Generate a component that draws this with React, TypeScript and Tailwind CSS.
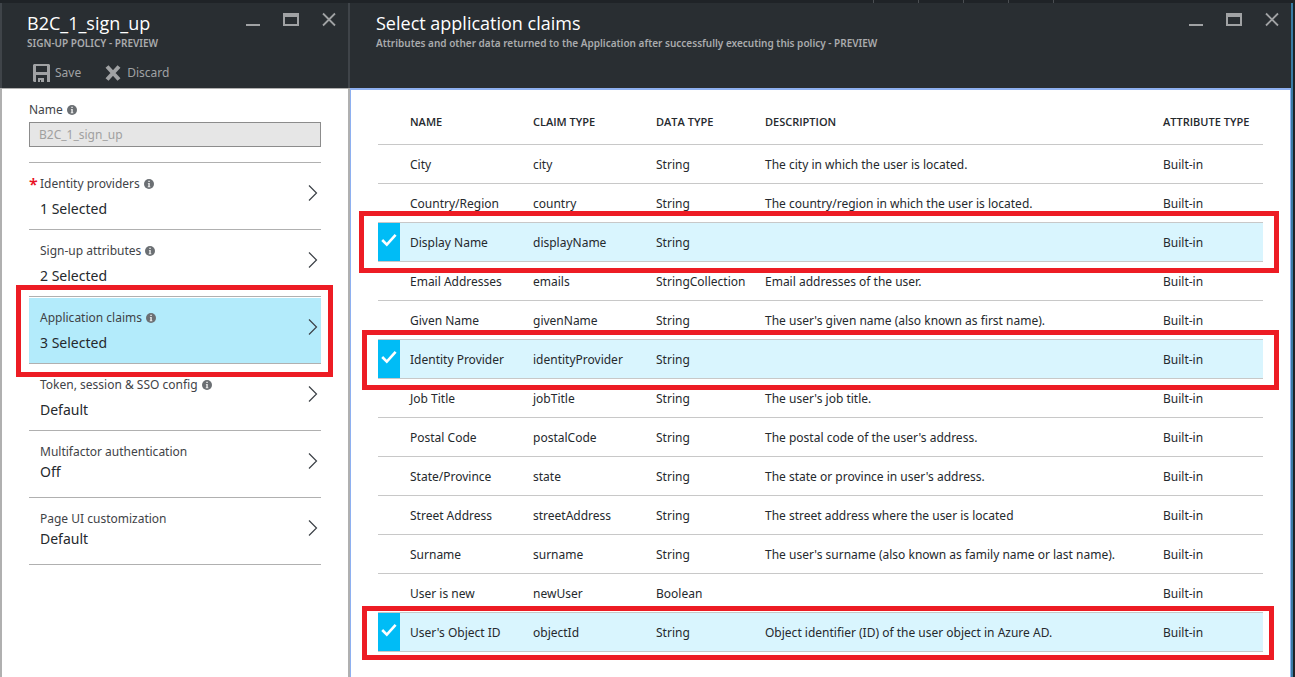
import React from "react";

type Setting = {
  label: string;
  value: string;
  info?: boolean;
  required?: boolean;
  selected?: boolean;
};

const settings: Setting[] = [
  { label: "Identity providers", value: "1 Selected", info: true, required: true },
  { label: "Sign-up attributes", value: "2 Selected", info: true },
  { label: "Application claims", value: "3 Selected", info: true, selected: true },
  { label: "Token, session & SSO config", value: "Default", info: true },
  { label: "Multifactor authentication", value: "Off" },
  { label: "Page UI customization", value: "Default" },
];

type Claim = {
  name: string;
  claim: string;
  type: string;
  description: string;
  outline?: string;
};

const claims: Claim[] = [
  { name: "City", claim: "city", type: "String", description: "The city in which the user is located." },
  { name: "Country/Region", claim: "country", type: "String", description: "The country/region in which the user is located." },
  { name: "Display Name", claim: "displayName", type: "String", description: "", outline: "-top-[11px] -bottom-[13px] -left-[19px] -right-4" },
  { name: "Email Addresses", claim: "emails", type: "StringCollection", description: "Email addresses of the user." },
  { name: "Given Name", claim: "givenName", type: "String", description: "The user's given name (also known as first name)." },
  { name: "Identity Provider", claim: "identityProvider", type: "String", description: "", outline: "-top-[9px] -bottom-[13px] -left-4 -right-4" },
  { name: "Job Title", claim: "jobTitle", type: "String", description: "The user's job title." },
  { name: "Postal Code", claim: "postalCode", type: "String", description: "The postal code of the user's address." },
  { name: "State/Province", claim: "state", type: "String", description: "The state or province in user's address." },
  { name: "Street Address", claim: "streetAddress", type: "String", description: "The street address where the user is located" },
  { name: "Surname", claim: "surname", type: "String", description: "The user's surname (also known as family name or last name)." },
  { name: "User is new", claim: "newUser", type: "Boolean", description: "" },
  { name: "User's Object ID", claim: "objectId", type: "String", description: "Object identifier (ID) of the user object in Azure AD.", outline: "-top-[6px] -bottom-[10px] -left-4 -right-[11px]" },
];

function InfoIcon() {
  return (
    <svg width="10" height="10" viewBox="0 0 10 10" className="shrink-0" aria-hidden="true">
      <circle cx="5" cy="5" r="5" fill="#6b6f73" />
      <path d="M4.3 1.7h1.5v1.3H4.3zM3.9 4h1.9v3.3h.5v.9H3.8v-.9h.5V4.8h-.4z" fill="#e8e8e8" />
    </svg>
  );
}

function Chevron() {
  return (
    <svg width="10" height="16" viewBox="0 0 10 16" fill="none" stroke="#3b4046" strokeWidth="1.2" className="shrink-0" aria-hidden="true">
      <path d="M1 0.5 8.5 8 1 15.5" />
    </svg>
  );
}

function WindowControls() {
  return (
    <div className="flex gap-[22px] pt-2 text-[#a0a2a4]">
      <button type="button" aria-label="Minimize" className="h-4 w-4">
        <svg width="16" height="16" viewBox="0 0 16 16" aria-hidden="true">
          <path d="M1 13h14v2H1z" fill="currentColor" />
        </svg>
      </button>
      <button type="button" aria-label="Maximize" className="h-4 w-4">
        <svg width="16" height="16" viewBox="0 0 16 16" aria-hidden="true">
          <path fillRule="evenodd" d="M0 2h16v13H0zM2 6h12v7H2z" fill="currentColor" />
        </svg>
      </button>
      <button type="button" aria-label="Close" className="h-4 w-4">
        <svg width="16" height="16" viewBox="0 0 16 16" fill="none" stroke="currentColor" strokeWidth="1.8" aria-hidden="true">
          <path d="M2 2.5 14 14.5M14 2.5 2 14.5" />
        </svg>
      </button>
    </div>
  );
}

function SettingRow({ item }: { item: Setting }) {
  return (
    <li className="relative h-[67px] border-b border-[#b0b0b0]">
      <button
        type="button"
        className={
          item.selected
            ? "flex h-full w-full items-start justify-between border-t border-white bg-[#b3ebfb] pr-[3px] text-left"
            : "flex h-full w-full items-start justify-between border-t border-transparent pr-[3px] text-left"
        }
      >
        <span className="flex flex-col pt-[10px]">
          <span className="flex h-5 items-center text-[12px] leading-5 text-[#3f4347]">
            <span className="w-[11px] text-[16px] leading-4 font-semibold text-[#e81123]">{item.required ? "*" : ""}</span>
            <span className="mr-1">{item.label}</span>
            {item.info && <InfoIcon />}
          </span>
          <span className={item.info ? "pt-[5px] pl-[11px] text-[14px] leading-5 text-[#25292d]" : "pl-[11px] text-[14px] leading-5 text-[#25292d]"}>
            {item.value}
          </span>
        </span>
        <span className="pt-[21px]">
          <Chevron />
        </span>
      </button>
      {item.selected && <span className="pointer-events-none absolute -top-3 -right-3 -bottom-[14px] -left-[13px] z-10 border-5 border-[#ed1c24]" />}
    </li>
  );
}

function ClaimRow({ item }: { item: Claim }) {
  const selected = Boolean(item.outline);
  return (
    <tr className={selected ? "relative h-[39px] border-b border-[#c8c8c8] bg-[#d9f5fe]" : "h-[39px] border-b border-[#c8c8c8]"}>
      <td className={selected ? "bg-[#00bcf6] p-0" : "p-0"}>
        <label className="flex h-[38px] items-center justify-center pb-1">
          <input type="checkbox" defaultChecked={selected} aria-label={item.name} className="peer sr-only" />
          {selected && (
            <svg width="16" height="14" viewBox="0 0 16 14" fill="none" stroke="#fff" strokeWidth="2.6" aria-hidden="true">
              <path d="M1.2 7 5.8 11.6 14.6 1.8" />
            </svg>
          )}
        </label>
        {item.outline && <span className={`pointer-events-none absolute z-10 border-5 border-[#ed1c24] ${item.outline}`} />}
      </td>
      <td className="px-[10px] pt-[2px]">{item.name}</td>
      <td className="px-[10px] pt-[2px]">{item.claim}</td>
      <td className="px-[10px] pt-[2px]">{item.type}</td>
      <td className="px-[10px] pt-[2px]">{item.description}</td>
      <td className="px-[10px] pt-[2px]">Built-in</td>
    </tr>
  );
}

export default function App() {
  return (
    <div className="flex min-h-screen flex-col overflow-hidden bg-[#1f2327] font-['Noto_Sans','Open_Sans',sans-serif]">
      <div className="flex h-[3px] justify-end gap-[44px] pr-[241px]">
        <span className="w-px bg-[#4a4e52]" />
        <span className="w-px bg-[#4a4e52]" />
        <span className="w-px bg-[#4a4e52]" />
        <span className="w-px bg-[#4a4e52]" />
        <span className="w-px bg-[#4a4e52]" />
      </div>
      <div className="flex flex-1 pr-[2px]">
        <section className="flex w-[350px] shrink-0 flex-col">
          <header className="flex h-[85px] justify-between border-x-2 border-[#3f4449] bg-[#292e32] pr-[11px] pl-[25px]">
            <div>
              <h1 className="pt-2 font-['Open_Sans',sans-serif] text-[18px] leading-6 text-white">B2C_1_sign_up</h1>
              <p className="text-[10px] leading-4 font-semibold text-[#a9abad]">SIGN-UP POLICY - PREVIEW</p>
              <div className="flex gap-6 pt-3 pl-[6px] text-[12px] leading-5 text-[#a0a2a4]">
                <button type="button" className="flex items-center gap-1">
                  <svg width="18" height="18" viewBox="0 0 18 18" aria-hidden="true">
                    <path fillRule="evenodd" d="M1 0h15l1 1v17h-3v-7H3v7H1l-1-1V1zM3 2v6h11V2zM5 14h6v4H8v-2H7v2H5z" fill="currentColor" />
                  </svg>
                  Save
                </button>
                <button type="button" className="flex items-center gap-[6px]">
                  <svg width="16" height="16" viewBox="0 0 16 16" fill="none" stroke="currentColor" strokeWidth="4" aria-hidden="true">
                    <path d="M2 1.5 14 14.5M14 1.5 2 14.5" />
                  </svg>
                  Discard
                </button>
              </div>
            </div>
            <WindowControls />
          </header>
          <div className="flex-1 border-x-2 border-t border-[#b0b0b0] bg-white px-[27px] pt-[11px]">
            <label htmlFor="policy-name" className="flex items-center gap-1 text-[12px] leading-5 text-[#3f4347]">
              Name <InfoIcon />
            </label>
            <input
              id="policy-name"
              disabled
              defaultValue="B2C_1_sign_up"
              className="mt-[2px] block h-[25px] w-full border border-[#8c8c8c] bg-[#e6e6e6] px-[9px] text-[12px] text-[#a0a0a0]"
            />
            <ul className="mt-[15px] border-t border-[#b0b0b0]">
              {settings.map((item) => (
                <SettingRow key={item.label} item={item} />
              ))}
            </ul>
          </div>
        </section>
        <section className="flex min-w-0 flex-1 flex-col border-r-2 border-[#3a7ca5]">
          <header className="flex h-[85px] justify-between bg-[#292e32] pr-[11px] pl-[26px]">
            <div>
              <h2 className="pt-2 font-['Open_Sans',sans-serif] text-[18px] leading-6 text-white">Select application claims</h2>
              <p className="text-[10px] leading-4 font-semibold text-[#a9abad]">
                Attributes and other data returned to the Application after successfully executing this policy - PREVIEW
              </p>
            </div>
            <WindowControls />
          </header>
          <div className="flex-1 border border-t-2 border-b-0 border-[#8eb0f0] bg-white px-[27px] pt-[10px]">
            <table className="w-full table-fixed border-collapse text-left text-[12px] leading-5 text-[#25292d]">
              <colgroup>
                <col className="w-[22px]" />
                <col className="w-[123px]" />
                <col className="w-[123px]" />
                <col className="w-[109px]" />
                <col />
                <col className="w-[110px]" />
              </colgroup>
              <thead>
                <tr className="h-[44px] border-b border-[#c8c8c8] font-['Open_Sans',sans-serif] text-[11px]">
                  <th aria-label="Selected" />
                  <th className="px-[10px] font-semibold">NAME</th>
                  <th className="px-[10px] font-semibold">CLAIM TYPE</th>
                  <th className="px-[10px] font-semibold">DATA TYPE</th>
                  <th className="px-[10px] font-semibold">DESCRIPTION</th>
                  <th className="px-[10px] font-semibold">ATTRIBUTE TYPE</th>
                </tr>
              </thead>
              <tbody>
                {claims.map((item) => (
                  <ClaimRow key={item.name} item={item} />
                ))}
              </tbody>
            </table>
          </div>
        </section>
      </div>
    </div>
  );
}
